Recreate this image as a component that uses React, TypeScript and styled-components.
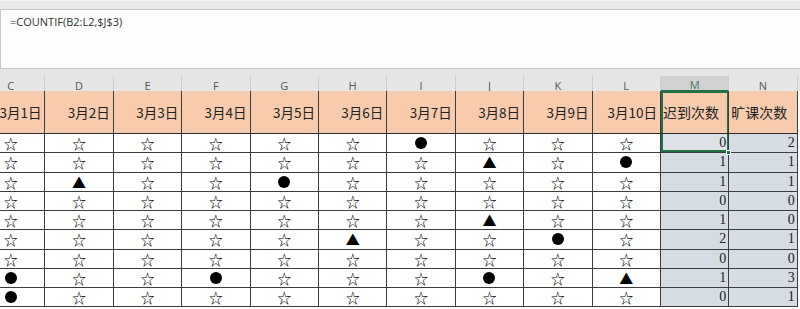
import React from "react";
import styled, { createGlobalStyle, css } from "styled-components";

const GlobalStyle = createGlobalStyle`
  html, body { margin: 0; padding: 0; background: #ffffff; overflow: hidden; }
  body { width: 800px; height: 309px; }
`;

const Page = styled.div`
  width: 800px;
  height: 309px;
  overflow: hidden;
  display: flex;
  flex-direction: column;
  background: #ffffff;
`;

const TopStrip = styled.div`
  height: 9px;
  background: #e9e9e9;
  border-top: 1px solid #f3f3f3;
  box-sizing: border-box;
  flex: none;
`;

const FormulaBox = styled.div`
  height: 60px;
  box-sizing: border-box;
  flex: none;
  background: #fdfdfd;
  border: 1px solid #c6c6c6;
  border-right: none;
  padding: 5px 0 0 9px;
  font-family: "Open Sans", "Noto Sans", sans-serif;
  font-size: 11px;
  color: #333;
  line-height: 14px;
`;

const Band = styled.div`
  height: 7px;
  flex: none;
  background: #e6e6e6;
`;

const COLW = 68.4;

const ColHeaderRow = styled.div`
  display: grid;
  grid-template-columns: repeat(12, ${COLW}px);
  margin-left: -23px;
  height: 15px;
  flex: none;
  background: #e6e6e6;
`;

const ColHeader = styled.div<{ $selected?: boolean }>`
  box-sizing: border-box;
  border-right: 1px solid #cdcdcd;
  display: flex;
  align-items: center;
  justify-content: center;
  padding-top: 3px;
  line-height: 11px;
  font-family: "Open Sans", "Noto Sans", sans-serif;
  font-size: 11px;
  color: #555;
  ${(p) =>
    p.$selected &&
    css`
      background: #d2d2d2;
      color: #3f7a5a;
      border-bottom: 2px solid #217346;
    `}
`;

const Sheet = styled.div`
  display: grid;
  grid-template-columns: repeat(12, ${COLW}px);
  grid-template-rows: 43px;
  grid-auto-rows: 19.25px;
  margin-left: -23px;
  flex: none;
`;

const HeadCell = styled.div<{ $active?: boolean; $text?: boolean }>`
  position: relative;
  box-sizing: border-box;
  background: #f8cbad;
  border-right: 1px solid #3c3c3c;
  border-bottom: 1px solid #2c2c2c;
  display: flex;
  align-items: center;
  justify-content: ${(p) => (p.$text ? "flex-start" : "flex-end")};
  padding: ${(p) => (p.$text ? "0 0 0 2px" : "0 3px 0 0")};
  font-family: "Noto Sans CJK SC", "Noto Sans", sans-serif;
  font-size: ${(p) => (p.$text ? "14px" : "13.5px")};
  color: #222;
  white-space: nowrap;
  overflow: hidden;
  ${(p) =>
    p.$active &&
    css`
      box-shadow: inset 2px 2px 0 #217346, inset -1px 0 0 #217346;
    `}
`;

const Cell = styled.div`
  box-sizing: border-box;
  border-right: 1px solid #3c3c3c;
  border-bottom: 1px solid #3c3c3c;
  display: flex;
  align-items: center;
  justify-content: center;
  font-family: "Noto Sans CJK SC", "DejaVu Sans", sans-serif;
  font-size: 14px;
  color: #000;
  line-height: 1;
  background: #fff;
`;

const Mark = styled.span<{ $kind: string }>`
  display: inline-block;
  ${(p) =>
    p.$kind === "c" &&
    css`
      width: 12px;
      height: 12px;
      border-radius: 50%;
      background: #000;
    `}
`;

const NumCell = styled.div<{ $active?: boolean }>`
  position: relative;
  box-sizing: border-box;
  background: #d6dce4;
  border-right: 1px solid #3c3c3c;
  border-bottom: 1px solid #3c3c3c;
  display: flex;
  align-items: center;
  justify-content: flex-end;
  padding-right: 2px;
  font-family: "Liberation Serif", "DejaVu Serif", serif;
  font-size: 14px;
  color: #222;
  ${(p) =>
    p.$active &&
    css`
      background: #dde2e8;
      box-shadow: inset 2px 0 0 #217346, inset -1px -2px 0 #217346;
      &::after {
        content: "";
        position: absolute;
        right: -3px;
        bottom: -3px;
        width: 5px;
        height: 5px;
        background: #217346;
        border: 1px solid #fff;
        box-sizing: border-box;
        z-index: 2;
      }
    `}
`;

const columns = ["C", "D", "E", "F", "G", "H", "I", "J", "K", "L", "M", "N"];
const headers = [
  "3月1日",
  "3月2日",
  "3月3日",
  "3月4日",
  "3月5日",
  "3月6日",
  "3月7日",
  "3月8日",
  "3月9日",
  "3月10日",
  "迟到次数",
  "旷课次数",
];

const rows: { marks: string; m: number; n: number }[] = [
  { marks: "sssssscsss", m: 0, n: 2 },
  { marks: "ssssssstsc", m: 1, n: 1 },
  { marks: "stsscsssss", m: 1, n: 1 },
  { marks: "ssssssssss", m: 0, n: 0 },
  { marks: "ssssssstss", m: 1, n: 0 },
  { marks: "ssssstsscs", m: 2, n: 1 },
  { marks: "ssssssssss", m: 0, n: 0 },
  { marks: "csscssscst", m: 1, n: 3 },
  { marks: "csssssssss", m: 0, n: 1 },
];

function renderMark(k: string) {
  if (k === "c") return <Mark $kind="c" />;
  if (k === "t") return <Mark $kind="t">▲</Mark>;
  return <Mark $kind="s">☆</Mark>;
}

export default function App() {
  return (
    <Page>
      <GlobalStyle />
      <TopStrip />
      <FormulaBox>=COUNTIF(B2:L2,$J$3)</FormulaBox>
      <Band />
      <ColHeaderRow>
        {columns.map((c) => (
          <ColHeader key={c} $selected={c === "M"}>
            {c}
          </ColHeader>
        ))}
      </ColHeaderRow>
      <Sheet>
        {headers.map((h, i) => (
          <HeadCell key={h} $active={i === 10} $text={i >= 10}>
            {h}
          </HeadCell>
        ))}
        {rows.map((r, ri) => (
          <React.Fragment key={ri}>
            {r.marks.split("").map((k, ci) => (
              <Cell key={ci}>{renderMark(k)}</Cell>
            ))}
            <NumCell $active={ri === 0}>{r.m}</NumCell>
            <NumCell>{r.n}</NumCell>
          </React.Fragment>
        ))}
      </Sheet>
    </Page>
  );
}
